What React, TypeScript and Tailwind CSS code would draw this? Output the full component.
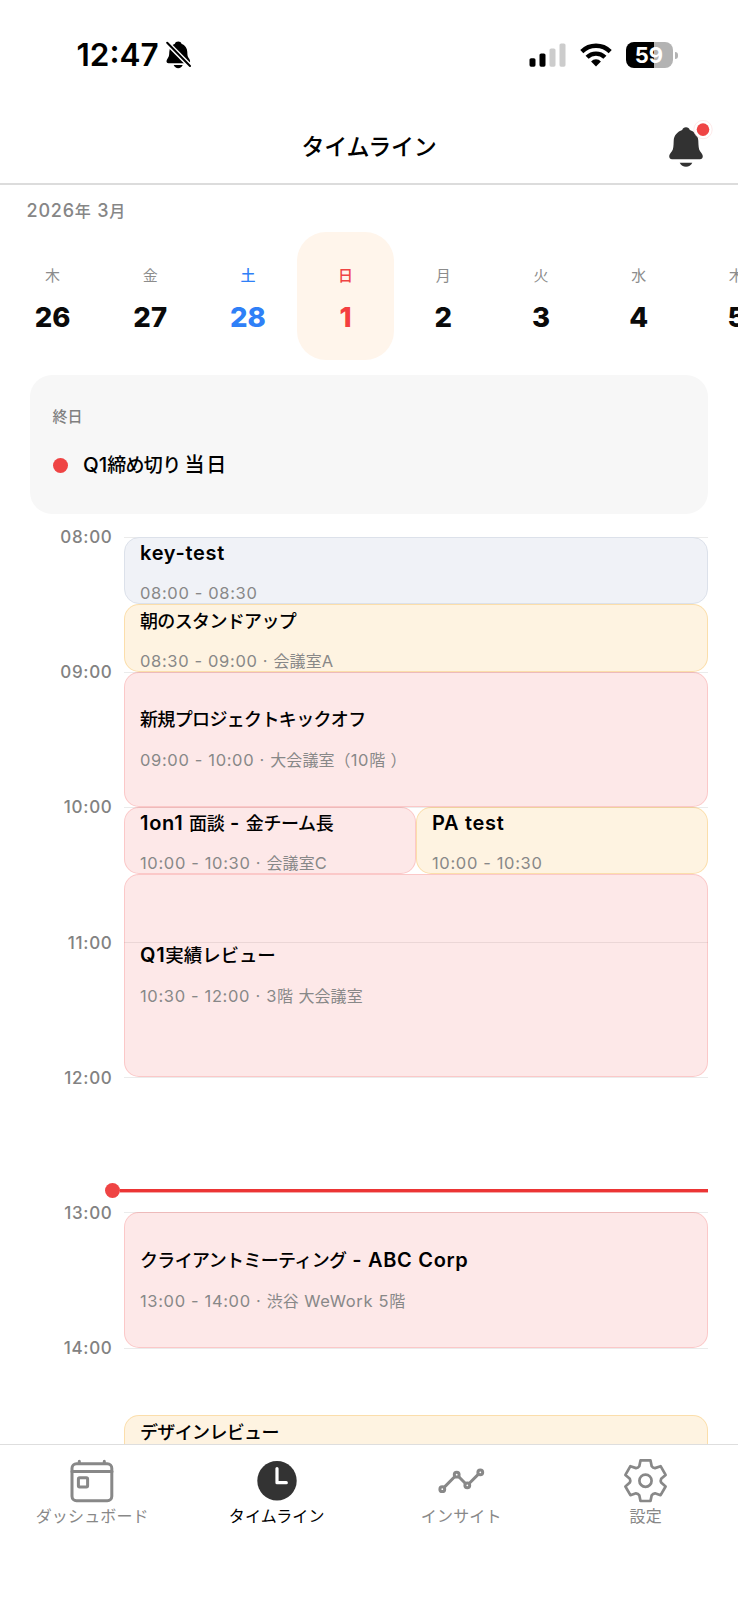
import type { ReactNode } from 'react'
import clsx from 'clsx'

type Day = { weekday: string; date: number; color?: string; active?: boolean }

type EventItem = {
  title: string
  titleCjk?: string
  time: string
  area: string
  tone: 'gray' | 'amber' | 'red'
  short?: boolean
}

const days: Day[] = [
  { weekday: '木', date: 26 },
  { weekday: '金', date: 27 },
  { weekday: '土', date: 28, color: 'blue' },
  { weekday: '日', date: 1, color: 'red', active: true },
  { weekday: '月', date: 2 },
  { weekday: '火', date: 3 },
  { weekday: '水', date: 4 },
  { weekday: '木', date: 5 },
]

// one grid row is half an hour, row 1 starts at 08:00
const hours = [
  { label: '08:00', row: 'row-start-1' },
  { label: '09:00', row: 'row-start-3' },
  { label: '10:00', row: 'row-start-5' },
  { label: '11:00', row: 'row-start-7' },
  { label: '12:00', row: 'row-start-9' },
  { label: '13:00', row: 'row-start-11' },
  { label: '14:00', row: 'row-start-13' },
]

const events: EventItem[] = [
  { title: 'key-test', time: '08:00 - 08:30', area: 'row-start-1 row-span-1 col-start-2 col-span-2', tone: 'gray', short: true },
  { title: '朝のスタンドアップ', time: '08:30 - 09:00 · 会議室A', area: 'row-start-2 row-span-1 col-start-2 col-span-2', tone: 'amber', short: true },
  { title: '新規プロジェクトキックオフ', time: '09:00 - 10:00 · 大会議室（10階 ）', area: 'row-start-3 row-span-2 col-start-2 col-span-2', tone: 'red' },
  {
    title: '1on1 面談 - 金チーム長',
    titleCjk: 'text-[18px] font-medium tracking-[-0.400px]',
    time: '10:00 - 10:30 · 会議室C',
    area: 'row-start-5 row-span-1 col-start-2',
    tone: 'red',
    short: true,
  },
  { title: 'PA test', time: '10:00 - 10:30', area: 'row-start-5 row-span-1 col-start-3', tone: 'amber', short: true },
  {
    title: 'Q1実績レビュー',
    titleCjk: 'text-[18.500px] font-medium tracking-[-0.100px]',
    time: '10:30 - 12:00 · 3階 大会議室',
    area: 'row-start-6 row-span-3 col-start-2 col-span-2',
    tone: 'red',
  },
  { title: 'クライアントミーティング - ABC Corp', time: '13:00 - 14:00 · 渋谷 WeWork 5階', area: 'row-start-11 row-span-2 col-start-2 col-span-2', tone: 'red' },
  { title: 'デザインレビュー', time: '14:30 - 15:00', area: 'row-start-14 row-span-1 col-start-2 col-span-2', tone: 'amber', short: true },
]

const tones = {
  gray: 'bg-[#f0f2f7] border-[#dce1ea]',
  amber: 'bg-[#f59e0b]/12 border-[#f59e0b]/25',
  red: 'bg-[#ef4444]/12 border-[#ef4444]/20',
}

// Japanese glyphs look bigger than the latin ones, so they get their own size
function Mixed({ text, cjk }: { text: string; cjk: string }) {
  const parts = text.split(/([\u3000-\u9fff\uff00-\uffef]+)/).filter(Boolean)
  return (
    <>
      {parts.map((part, i) =>
        /[\u3000-\u9fff\uff00-\uffef]/.test(part) ? (
          <span key={i} className={cjk}>{part}</span>
        ) : (
          <span key={i}>{part}</span>
        )
      )}
    </>
  )
}

function StatusBar() {
  return (
    <div className="h-[110px] shrink-0 flex items-start justify-between pl-[76.500px] pr-[60.500px] pt-[40px]">
      <div className="flex items-center gap-[6px] h-[30px]">
        <span className="text-[31.500px] leading-[30px] font-semibold w-[83px] whitespace-nowrap">12:47</span>
        <svg width="25" height="28" viewBox="0 0 25 28">
          <path d="M12.2.5c-1.7 0-2.900.9-3.300 2.300C5.400 4.200 3.400 7.200 3.300 11c-.1 4-.6 5-1.700 6.400C.9 18.400.5 19.200.5 20.200c0 1.200.8 2 2 2h19.600c1.200 0 2-.8 2-2 0-1-.4-1.800-1.100-2.800C21.900 16 21.400 15 21.300 11c-.1-3.800-2.200-6.800-5.800-8.200C15.100 1.400 13.900.5 12.200.5z" />
          <path d="M7.700 24h9c-.7 2-2.400 3.200-4.500 3.200S8.400 26 7.700 24z" />
          <path d="M0 .8L25 26" stroke="#fff" strokeWidth="5" />
          <path d="M1.200 1.800L24 25" stroke="#000" strokeWidth="2" strokeLinecap="round" />
        </svg>
      </div>
      <div className="flex items-center gap-[14px] h-[30px]">
        <svg width="37" height="24" viewBox="0 0 37 24">
          <rect x="0.500" y="15.200" width="6" height="8.500" rx="1.600" />
          <rect x="10.500" y="10.500" width="6" height="13.200" rx="1.600" />
          <rect x="20.500" y="5.500" width="6" height="18.200" rx="1.600" fill="#ccc" />
          <rect x="30.500" y="0.500" width="6" height="23.200" rx="1.600" fill="#ccc" />
        </svg>
        <svg width="32" height="24" viewBox="0 0 32 24" fill="none" stroke="#000" strokeWidth="4.400">
          <path d="M1.800 8.600a20.300 20.300 0 0 1 28.400 0" />
          <path d="M7.100 14.300a12.700 12.700 0 0 1 17.800 0" />
          <path d="M16 23.400l-4.900-5a6.900 6.900 0 0 1 9.800 0z" fill="#000" stroke="none" />
        </svg>
        <div className="flex items-center gap-[2px]">
          <div className="w-[47px] h-[26px] rounded-[8px] bg-[linear-gradient(90deg,#000_59.5%,#b3b3b3_59.5%)] text-white text-[22px] leading-[26px] font-bold text-center">
            59
          </div>
          <div className="w-[3px] h-[7px] rounded-r-[3px] bg-[#b3b3b3]" />
        </div>
      </div>
    </div>
  )
}

function Header() {
  return (
    <header className="relative h-[75px] shrink-0 border-b-2 border-[#dcdcdc] flex justify-center">
      <h1 className="text-[23px] leading-[75px] font-medium tracking-[-0.200px]">タイムライン</h1>
      <div className="absolute right-[25px] top-[8px]">
        <svg width="48" height="50" viewBox="0 0 48 50">
          <path fill="#323232" d="M21 9.300c-2 0-3.200 1-3.800 2.600C12.600 13.400 8.900 17.200 8.700 22.700c-.2 5-.2 8.300-1.800 10.600-1.200 1.800-2.700 3-2.700 5 0 1.800 1.200 3 2.800 3h28c1.600 0 2.800-1.200 2.800-3 0-2-1.500-3.200-2.700-5-1.600-2.300-1.600-5.600-1.800-10.600-.2-5.500-3.900-9.300-8.500-10.800C24.200 10.300 23 9.300 21 9.300z" />
          <path fill="#323232" d="M14.700 44.700h12.600c-1.200 2.600-3.600 4-6.300 4s-5.100-1.400-6.300-4z" />
          <circle cx="38" cy="11.600" r="9.200" fill="#fff" stroke="#fbdcdc" strokeWidth="0.600" />
          <circle cx="38" cy="11.600" r="6.300" fill="#ef4444" />
        </svg>
      </div>
    </header>
  )
}

function DayStrip() {
  return (
    <div className="flex shrink-0 w-[790px] pl-[3.700px]">
      {days.map((day, i) => (
        <div
          key={i}
          className={clsx(
            'w-[97.700px] h-[128px] shrink-0 rounded-[29px] flex flex-col items-center pt-[32px]',
            day.active && 'bg-[#fff5eb]'
          )}
        >
          <span
            className={clsx(
              'text-[15px] leading-[24px]',
              day.color === 'blue' ? 'font-medium text-[#2f80f7]' : day.color === 'red' ? 'font-medium text-[#ef4444]' : 'text-[#8c8c8c]'
            )}
          >
            {day.weekday}
          </span>
          <span
            className={clsx(
              'mt-[13px] text-[27.500px] leading-[32px] font-extrabold',
              day.color === 'blue' ? 'text-[#2f80f7]' : day.color === 'red' ? 'text-[#f43f3f]' : 'text-[#0a0a0a]'
            )}
          >
            {day.date}
          </span>
        </div>
      ))}
    </div>
  )
}

function AllDay() {
  return (
    <div className="mt-[15px] mx-[30px] h-[139px] shrink-0 rounded-[22px] bg-[#f7f7f7] px-[22.500px] pt-[30px]">
      <p className="text-[15px] leading-[24px] font-medium text-[#808080]">終日</p>
      <div className="mt-[20px] flex items-center h-[32px]">
        <span className="w-[15px] h-[15px] rounded-full bg-[#ef4444]" />
        <p className="ml-[15.500px] pt-px text-[20.500px] font-medium whitespace-nowrap">
          Q1<span className="text-[19px] tracking-[-0.700px]">締め切り</span>
          <span className="ml-[4px] text-[20px] tracking-[1.800px]">当日</span>
        </p>
      </div>
    </div>
  )
}

function EventCard({ event }: { event: EventItem }) {
  return (
    <div
      className={clsx(
        'rounded-[15px] border px-[15px] overflow-hidden flex flex-col whitespace-nowrap',
        event.area,
        tones[event.tone],
        event.short ? 'justify-start pt-[3.500px]' : 'justify-center'
      )}
    >
      <p className="h-[24px] shrink-0 text-[20px] leading-[24px] font-semibold tracking-[0.700px]">
        <Mixed text={event.title} cjk={event.titleCjk ?? 'text-[18px] font-medium tracking-[-0.650px]'} />
      </p>
      <p
        className={clsx(
          'h-[24px] shrink-0 text-[16.500px] leading-[24px] text-[#888] tracking-[0.650px]',
          event.short ? 'mt-[16px]' : 'mt-[17px]'
        )}
      >
        <Mixed text={event.time} cjk="text-[16px] tracking-[0.100px]" />
      </p>
    </div>
  )
}

function Timeline() {
  return (
    <div className="relative mt-[22.500px] pr-[30px] grid grid-cols-[124px_1fr_1fr] auto-rows-[67.600px]">
      {hours.map((hour) => (
        <div key={hour.label} className={clsx('col-start-1 col-span-3 flex items-start h-0', hour.row)}>
          <span className="w-[112.500px] mr-[11.500px] -mt-[11.500px] text-right text-[17px] leading-[24px] font-medium tracking-[0.700px] text-[#828282]">
            {hour.label}
          </span>
          <div className="flex-1 h-px bg-[#ebebeb]" />
        </div>
      ))}
      {events.map((event) => (
        <EventCard key={event.title} event={event} />
      ))}
      <div className="absolute left-[105px] right-[30px] top-[646.500px] h-[15px] flex items-center">
        <span className="w-[15px] h-[15px] rounded-full bg-[#ef4444]" />
        <span className="flex-1 h-[4px] mt-px bg-[#ec3535] border-b border-[#f6a8a8]" />
      </div>
    </div>
  )
}

function NavItem({ label, active, children }: { label: string; active?: boolean; children: ReactNode }) {
  return (
    <div className={clsx('flex-1 flex flex-col items-center pt-[13px]', active ? 'text-black' : 'text-[#888]')}>
      {children}
      <span className="text-[16px] leading-[24px] tracking-[0.150px]">{label}</span>
    </div>
  )
}

function BottomNav() {
  return (
    <nav className="h-[156px] shrink-0 bg-white border-t border-[#dedede] flex">
      <NavItem label="ダッシュボード">
        <svg width="46" height="46" viewBox="0 0 46 46" fill="none" stroke="#888" strokeWidth="3">
          <rect x="3" y="5.800" width="39.800" height="37" rx="4.500" />
          <path d="M3 13.400h40M10.300 5.500V3.200M35.300 5.500V3.200" strokeLinecap="round" />
          <rect x="9.400" y="19.700" width="9.200" height="9.200" rx="1.200" />
        </svg>
      </NavItem>
      <NavItem label="タイムライン" active>
        <svg width="46" height="46" viewBox="0 0 46 46" fill="none">
          <circle cx="23" cy="22.700" r="19.700" fill="#333" />
          <path d="M23 10.500v14.200h9.300" stroke="#fff" strokeWidth="3.200" strokeLinecap="round" strokeLinejoin="round" />
        </svg>
      </NavItem>
      <NavItem label="インサイト">
        <svg width="48" height="46" viewBox="-1 0 48 46" fill="none" stroke="#888" strokeWidth="3">
          <path d="M5.900 29.600l11.200-11.300M20.300 18.300l7.400 7.400M30.900 25.700l9.800-9.800" />
          <circle cx="4.300" cy="31.200" r="2.400" />
          <circle cx="18.700" cy="16.700" r="2.400" />
          <circle cx="29.300" cy="27.300" r="2.400" />
          <circle cx="42.300" cy="14.300" r="2.400" />
        </svg>
      </NavItem>
      <NavItem label="設定">
        <svg width="46" height="46" viewBox="-22.500 -22.700 46 46" fill="none" stroke="#888" strokeWidth="2.700" strokeLinejoin="round">
          <path d="M-5 -20.300L5 -20.300L6.200 -14.500Q7.500 -12.800 9.460 -12.600L15.100 -14.500L20.100 -5.800L15.660 -1.900Q14.700 0 15.660 1.900L20.100 5.800L15.100 14.500L9.460 12.600Q7.500 12.800 6.200 14.500L5 20.300L-5 20.300L-6.200 14.500Q-7.500 12.800 -9.460 12.600L-15.100 14.500L-20.100 5.800L-15.660 1.900Q-14.700 0 -15.660 -1.900L-20.100 -5.800L-15.100 -14.500L-9.460 -12.600Q-7.500 -12.800 -6.200 -14.500Z" />
          <circle r="6.100" />
        </svg>
      </NavItem>
    </nav>
  )
}

export default function App() {
  return (
    <main
      lang="ja"
      className="w-full h-[1600px] bg-white text-black overflow-hidden flex flex-col font-['Inter','Noto_Sans_CJK_JP',sans-serif]"
    >
      <StatusBar />
      <Header />
      <p className="pl-[26.500px] pt-[12.500px] h-[47px] shrink-0 text-[18px] leading-[26px] font-medium tracking-[0.800px] text-[#868686]">
        <Mixed text="2026年 3月" cjk="text-[16px]" />
      </p>
      <DayStrip />
      <div className="flex-1 min-h-0 overflow-hidden">
        <AllDay />
        <Timeline />
      </div>
      <BottomNav />
    </main>
  )
}
